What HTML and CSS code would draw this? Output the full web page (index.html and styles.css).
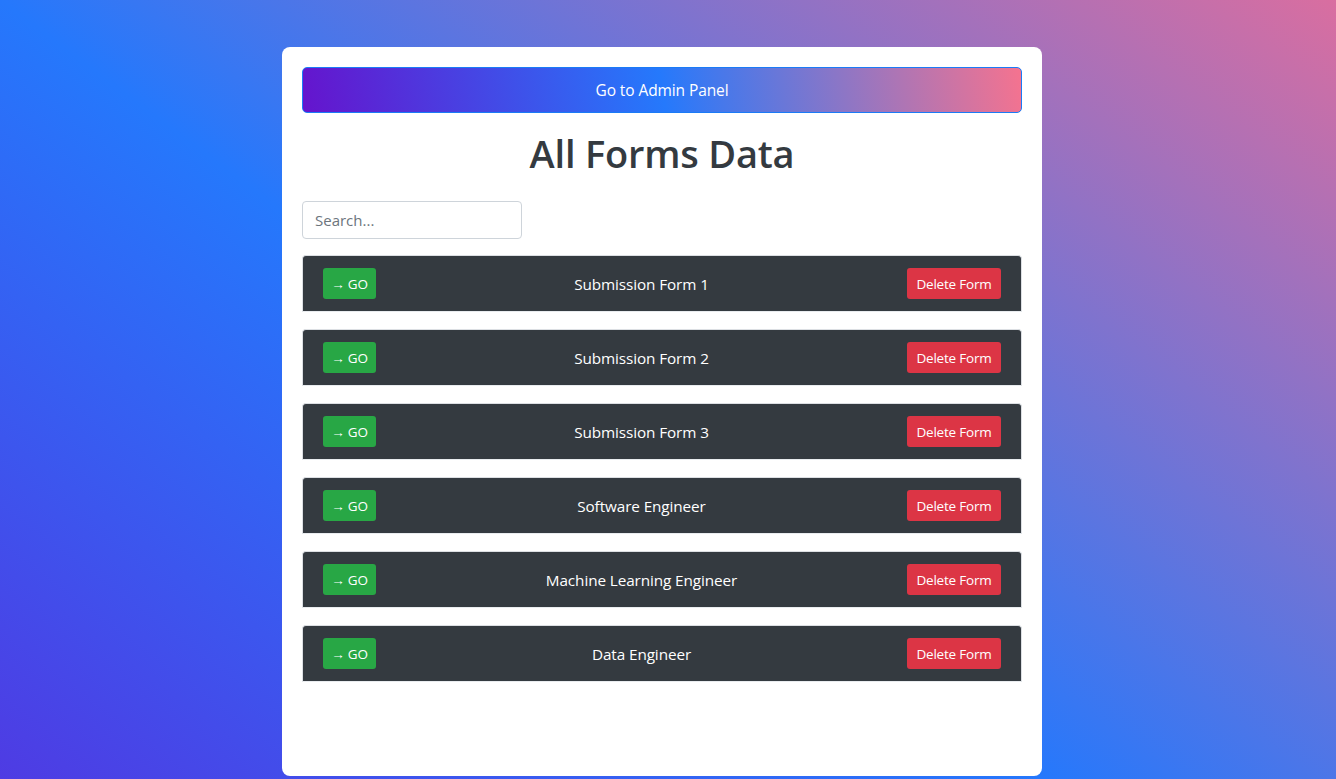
FILE: index.html
```html
<!DOCTYPE html>
<html lang="en">
<head>
<meta charset="utf-8">
<title>All Forms Data</title>
<link rel="stylesheet" href="styles.css">
</head>
<body>
<main class="card">
  <button class="admin-btn">Go to Admin Panel</button>
  <h1 class="title">All Forms Data</h1>
  <input class="search" type="text" placeholder="Search...">
  <ul class="form-list">
    <li class="form-row"><button class="go-btn">→ GO</button><span class="form-name">Submission Form 1</span><button class="del-btn">Delete Form</button></li>
    <li class="form-row"><button class="go-btn">→ GO</button><span class="form-name">Submission Form 2</span><button class="del-btn">Delete Form</button></li>
    <li class="form-row"><button class="go-btn">→ GO</button><span class="form-name">Submission Form 3</span><button class="del-btn">Delete Form</button></li>
    <li class="form-row"><button class="go-btn">→ GO</button><span class="form-name">Software Engineer</span><button class="del-btn">Delete Form</button></li>
    <li class="form-row"><button class="go-btn">→ GO</button><span class="form-name">Machine Learning Engineer</span><button class="del-btn">Delete Form</button></li>
    <li class="form-row"><button class="go-btn">→ GO</button><span class="form-name">Data Engineer</span><button class="del-btn">Delete Form</button></li>
  </ul>
</main>
</body>
</html>
```

FILE: styles.css
```css
* { box-sizing: border-box; }
html, body { height: 100%; }
body {
  margin: 0;
  font-family: "Open Sans", "Noto Sans", sans-serif;
  background-color: #5a30dc;
  background-image: linear-gradient(to top right, #5a2adc 0%, #2578fc 50%, #d96ea0 100%);
  background-size: 1336px 1000px;
  background-repeat: no-repeat;
  display: flex;
  justify-content: center;
  padding: 47px 12px 0 0;
  overflow: hidden;
}
.card {
  width: 760px;
  height: 729px;
  background: #fff;
  border-radius: 8px;
  padding: 20px;
  display: flex;
  flex-direction: column;
}
.admin-btn {
  height: 46px;
  width: 100%;
  border: 1px solid #1b7bf6;
  border-radius: 5px;
  background: linear-gradient(80deg, #6514cd 0%, #2579fc 50%, #f5738f 100%);
  color: #fff;
  font-family: inherit;
  font-size: 15.5px;
  letter-spacing: -0.1px;
}
.title {
  margin: 16px 0 24px;
  text-align: center;
  font-size: 38px;
  font-weight: 600;
  color: #343a40;
  line-height: 48px;
  letter-spacing: -0.2px;
}
.search {
  width: 220px;
  height: 38px;
  border: 1px solid #ced4da;
  border-radius: 4px;
  padding: 0 12px;
  font-family: inherit;
  font-size: 15px;
  color: #495057;
}
.search::placeholder { color: #6c757d; }
.form-list {
  list-style: none;
  margin: 16px 0 0;
  padding: 0;
  display: flex;
  flex-direction: column;
  gap: 17px;
}
.form-row {
  height: 57px;
  background: #343a40;
  border: 1px solid #dcdfe3;
  border-bottom-color: #e9ecef;
  border-radius: 4px 4px 0 0;
  padding: 0 20px;
  display: flex;
  align-items: center;
  justify-content: space-between;
}
.form-name {
  color: #fff;
  font-size: 15.3px;
  letter-spacing: -0.1px;
}
.go-btn, .del-btn {
  height: 31px;
  border: none;
  border-radius: 3px;
  color: #fff;
  font-family: inherit;
  font-size: 13.5px;
  letter-spacing: -0.2px;
  padding: 0;
}
.go-btn { width: 53px; background: #28a745; }
.del-btn { width: 94px; background: #dc3545; }
```
